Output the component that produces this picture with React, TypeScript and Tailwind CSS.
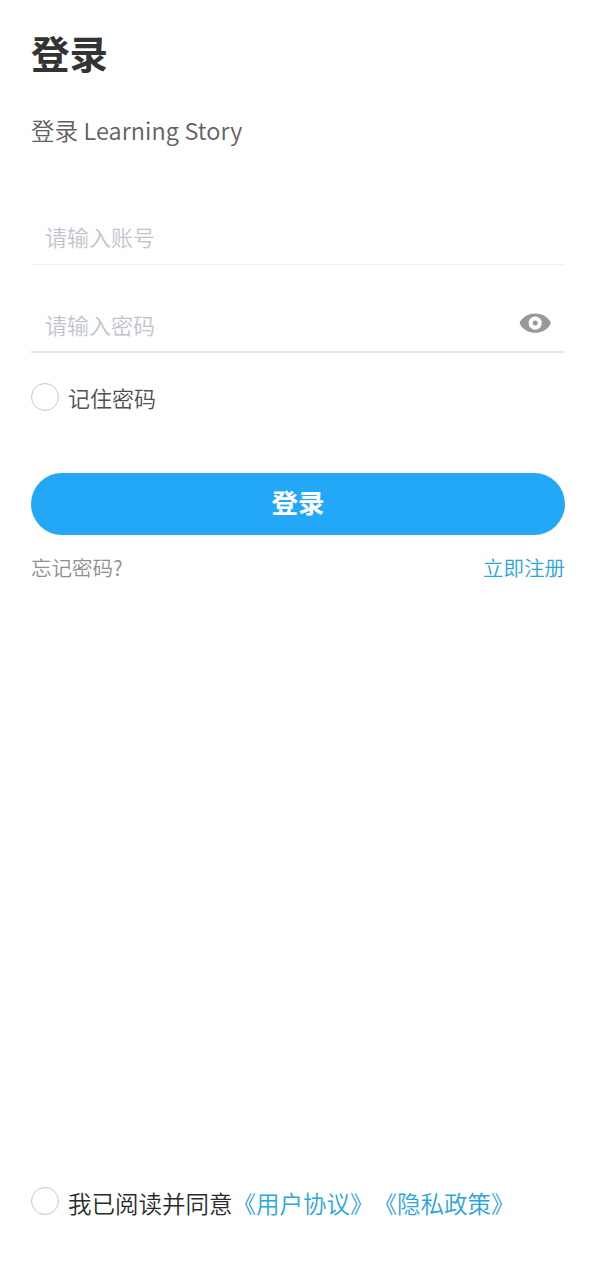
export default function App() {
  return (
    <main className="flex h-[1280px] w-[594px] flex-col bg-white pl-[31px] pr-[29px] font-['Noto_Sans_CJK_SC',sans-serif] font-[350] whitespace-nowrap">
      <h1 className="mt-[30px] h-[44px] text-[38.5px] leading-[44px] font-bold text-[#333333]">登录</h1>
      <p className="mt-[41px] h-[30px] text-[23.5px] leading-[30px] tracking-[0.1px] text-[#606060]">登录 Learning Story</p>
      <div className="mt-[67px] flex h-[53px] items-center border-b border-[#f0f0f0] pb-[4px] pl-[14px]">
        <span className="text-[22px] leading-[30px] text-[#c0c4cc]">请输入账号</span>
      </div>
      <div className="mt-[35px] flex h-[53px] items-center border-b-2 border-[#e8e8e8] pr-[14px] pb-[4px] pl-[14px]">
        <span className="text-[22px] leading-[30px] text-[#c0c4cc]">请输入密码</span>
        <svg className="mb-[2px] ml-auto h-[32px] w-[32px]" viewBox="0 0 32 32" fill="none">
          <path d="M1.2 17.4Q.3 16 1.2 14.6C4.5 9.2 9.8 6.4 16.3 6.4s12 2.8 15 8.2q.8 1.4 0 2.8C28 22.9 22.5 25.8 16.3 25.8S4.5 22.9 1.2 17.4Z" fill="#999999" />
          <circle cx="16.2" cy="16.1" r="6.6" fill="white" />
          <circle cx="16.2" cy="16.1" r="2.5" fill="#999999" />
        </svg>
      </div>
      <label className="mt-[30px] flex h-[28px] items-center gap-[9px]">
        <span className="size-[28px] rounded-full border border-[#c8c9cc]" />
        <span className="text-[22px] text-[#505050]">记住密码</span>
      </label>
      <button className="mt-[62px] h-[62px] shrink-0 rounded-full bg-[#23a8f8] pb-[4px] text-[26.5px] font-bold text-white">登录</button>
      <div className="mt-[17px] flex h-[30px] items-center justify-between text-[20.5px]">
        <span className="text-[#909090]">忘记密码?</span>
        <span className="text-[#2ba5e0]">立即注册</span>
      </div>
      <div className="mt-auto mb-[65px] flex h-[28px] items-center">
        <span className="mr-[9px] size-[28px] rounded-full border border-[#c8c9cc]" />
        <span className="mt-[6px] text-[23.5px] text-[#2b2b2b] [text-spacing-trim:space-all]">我已阅读并同意<span className="text-[#2ba5e0]">《用户协议》《隐私政策》</span></span>
      </div>
    </main>
  );
}
